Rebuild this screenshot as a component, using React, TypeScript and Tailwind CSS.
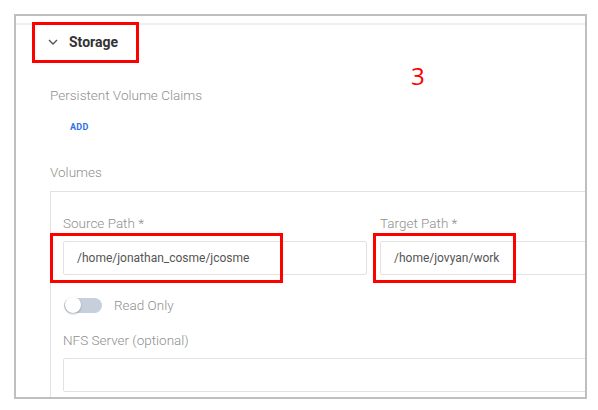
import React from 'react';

// Field label text, light grey like the material form
const Label = ({ children, className = '' }: { children: React.ReactNode; className?: string }) => (
  <div className={`text-[13.5px] leading-[20px] font-light text-[#8f8f8f] ${className}`}>{children}</div>
);

const TextInput = ({ value, className = '' }: { value?: string; className?: string }) => (
  <div
    className={`h-[34px] border border-[#e2e2e2] rounded-[2px] flex items-center pl-[13px] text-[12px] text-[#555] ${className}`}
  >
    {value}
  </div>
);

const App = () => {
  return (
    <div className="w-[598px] h-[410px] bg-white pt-[14px] pl-[14px] font-['Roboto',_'Liberation_Sans',_sans-serif]">
      <div className="relative w-[573px] h-[385px] border-2 border-[#bfbfbf] overflow-hidden bg-white">
        {/* separator from the section above */}
        <div className="mt-[7px] h-[2px] bg-[#efefef]" />

        {/* Section header */}
        <div className="h-[34px] flex items-center pl-[32px]">
          <svg width="10" height="6" viewBox="0 0 10 6" className="mr-[11px]">
            <path d="M1 1 L5 5 L9 1" fill="none" stroke="#555" strokeWidth="1.4" />
          </svg>
          <span className="text-[14px] font-bold text-[#333]">Storage</span>
        </div>

        <Label className="mt-[26px] pl-[34px]">Persistent Volume Claims</Label>
        <div className="mt-[15px] pl-[54px] text-[9px] leading-[14px] font-bold text-[#2f6fe8] tracking-[0.3px]">
          ADD
        </div>

        <Label className="mt-[28px] pl-[34px]">Volumes</Label>

        {/* Volume card */}
        <div className="mt-[9px] ml-[34px] w-[640px] h-[300px] border border-[#e2e2e2] pl-[12px]">
          <div className="flex gap-[13px] pt-[21px]">
            <div className="w-[304px] shrink-0">
              <Label>Source Path *</Label>
              <TextInput className="mt-[8px]" value="/home/jonathan_cosme/jcosme" />
            </div>
            <div className="w-[304px] shrink-0">
              <Label>Target Path *</Label>
              <TextInput className="mt-[8px]" value="/home/jovyan/work" />
            </div>
          </div>

          {/* Read only switch */}
          <div className="mt-[20px] h-[20px] flex items-center">
            <div className="ml-[1px] w-[38px] h-[15px] rounded-full bg-[#c6d0dc] relative flex items-center">
              <div className="absolute left-[1px] w-[16px] h-[16px] rounded-full bg-white shadow-[0_1px_2px_rgba(0,0,0,0.3)]" />
            </div>
            <span className="ml-[12px] text-[13.5px] font-light text-[#8f8f8f]">Read Only</span>
          </div>

          <Label className="mt-[15px]">NFS Server (optional)</Label>
          <TextInput className="mt-[8px] w-[620px]" />
        </div>

        {/* annotation overlays */}
        <div className="absolute left-[16px] top-[6px] w-[107px] h-[41px] border-[3px] border-[#ff0000]" />
        <div className="absolute left-[34px] top-[217px] w-[233px] h-[50px] border-[3px] border-[#ff0000]" />
        <div className="absolute left-[357px] top-[217px] w-[143px] h-[50px] border-[3px] border-[#ff0000]" />
        <div className="absolute left-[395px] top-[45px] text-[24px] leading-[30px] text-[#ff0000] font-['Open_Sans',_sans-serif]">
          3
        </div>
      </div>
    </div>
  );
};

export default App;
